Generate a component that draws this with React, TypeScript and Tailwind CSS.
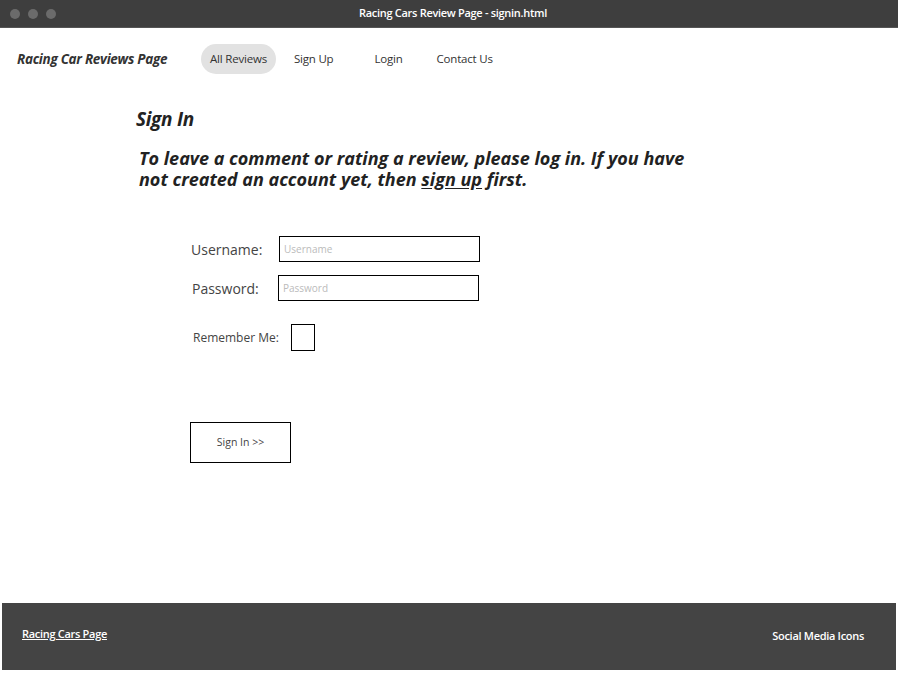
export default function App() {
  const font = { fontFamily: '"Open Sans", "Liberation Sans", sans-serif' };
  return (
    <div className="w-[898px] h-[678px] bg-white flex flex-col overflow-hidden" style={font}>
      {/* window title bar */}
      <div className="h-[28px] bg-[#3e3e3e] flex items-center relative shrink-0 border-b border-[#555]">
        <div className="flex gap-[8px] pl-[10px]">
          <span className="w-[10px] h-[10px] rounded-full bg-[#6b6b6b]" />
          <span className="w-[10px] h-[10px] rounded-full bg-[#6b6b6b]" />
          <span className="w-[10px] h-[10px] rounded-full bg-[#6b6b6b]" />
        </div>
        <div className="flex-1 text-center text-white text-[11px] font-semibold tracking-[-0.3px] pr-[48px]">
          Racing Cars Review Page - signin.html
        </div>
      </div>

      {/* nav */}
      <div className="flex items-center h-[30px] mt-[16px] pl-[17px] text-[#333]">
        <span className="text-[13.5px] font-bold italic tracking-[-0.3px] w-[184px]">Racing Car Reviews Page</span>
        <nav className="flex items-center text-[11.5px] tracking-[-0.2px]">
          <span className="bg-[#e2e2e2] rounded-full h-[30px] px-[9px] flex items-center">All Reviews</span>
          <span className="ml-[18px]">Sign Up</span>
          <span className="ml-[41px]">Login</span>
          <span className="ml-[34px]">Contact Us</span>
        </nav>
      </div>

      {/* main */}
      <main className="flex-1 pl-[136px] pt-[33px] text-[#222]">
        <h1 className="text-[19px] font-bold italic tracking-[-0.3px] leading-[24px]">Sign In</h1>
        <p className="mt-[17px] ml-[3px] text-[18px] font-bold italic leading-[21px] w-[552px]">
          To leave a comment or rating a review, please log in. If you have not created an account yet, then{" "}
          <span className="underline underline-offset-2">sign up</span> first.
        </p>

        <form className="mt-[46px] ml-[55px] flex flex-col text-[#444]">
          <div className="flex items-center">
            <label className="text-[14px] w-[88px]">Username:</label>
            <input
              className="w-[201px] h-[26px] border border-black px-[4px] text-[10px] placeholder:text-[#bbb] outline-none"
              placeholder="Username"
            />
          </div>
          <div className="flex items-center mt-[13px] ml-[1px]">
            <label className="text-[14px] w-[86px]">Password:</label>
            <input
              className="w-[201px] h-[26px] border border-black px-[4px] text-[10px] placeholder:text-[#bbb] outline-none"
              placeholder="Password"
              type="text"
            />
          </div>
          <div className="flex items-center mt-[23px] ml-[2px]">
            <label className="text-[12px] w-[98px]">Remember Me:</label>
            <span className="w-[24px] h-[27px] border border-black block" />
          </div>
          <div className="mt-[71px] -ml-[1px]">
            <button type="button" className="w-[101px] h-[41px] border border-black text-[10.5px] text-[#444]">
              Sign In &gt;&gt;
            </button>
          </div>
        </form>
      </main>

      {/* footer */}
      <footer className="h-[67px] mx-[2px] mb-[8px] bg-[#444] flex items-center justify-between pl-[20px] pr-[32px] text-white text-[11px] tracking-[-0.3px]">
        <a className="underline font-semibold -mt-[4px]">Racing Cars Page</a>
        <span className="font-semibold">Social Media Icons</span>
      </footer>
    </div>
  );
}
